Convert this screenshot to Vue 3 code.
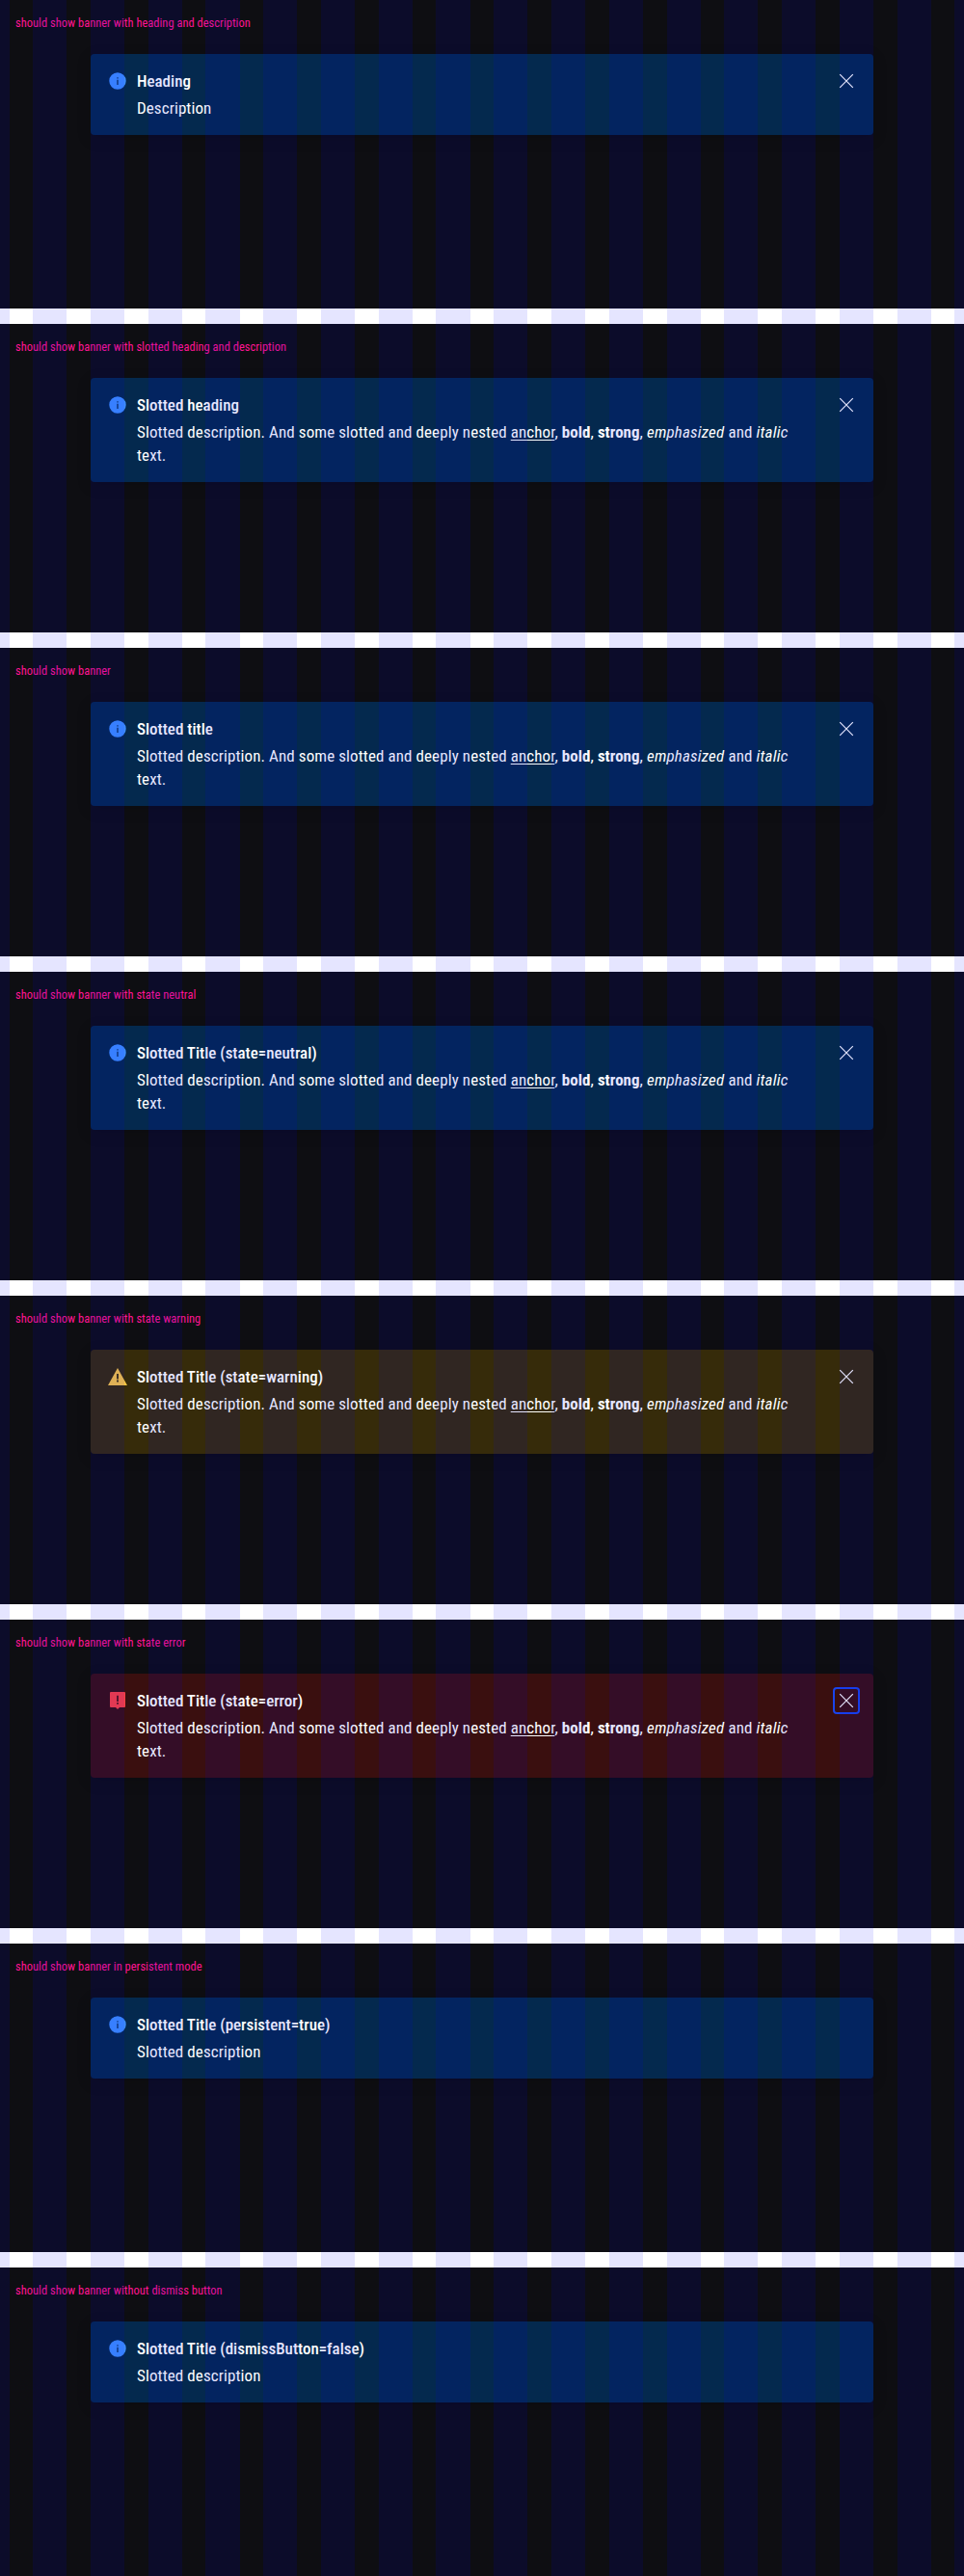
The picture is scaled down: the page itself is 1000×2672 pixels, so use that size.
<script setup>
const cases = [
  { label: 'should show banner with heading and description', title: 'Heading', text: 'Description', close: true },
  { label: 'should show banner with slotted heading and description', title: 'Slotted heading', close: true },
  { label: 'should show banner', title: 'Slotted title', close: true },
  { label: 'should show banner with state neutral', title: 'Slotted Title (state=neutral)', close: true },
  { label: 'should show banner with state warning', title: 'Slotted Title (state=warning)', state: 'warning', close: true },
  { label: 'should show banner with state error', title: 'Slotted Title (state=error)', state: 'error', close: true, focus: true },
  { label: 'should show banner in persistent mode', title: 'Slotted Title (persistent=true)', text: 'Slotted description' },
  { label: 'should show banner without dismiss button', title: 'Slotted Title (dismissButton=false)', text: 'Slotted description' },
]
</script>

<template>
  <div class="page">
    <section v-for="c in cases" :key="c.label" class="frame">
      <p class="label">{{ c.label }}</p>
      <div class="banner" :class="c.state">
        <svg v-if="c.state === 'warning'" class="icon" viewBox="0 0 24 24"><path fill-rule="evenodd" d="M12 3 22 21H2ZM11.100 9v5.500h1.800V9Zm0 6.600v2h1.800v-2Z" /></svg>
        <svg v-else-if="c.state === 'error'" class="icon" viewBox="0 0 24 24"><path fill-rule="evenodd" d="M5 3h14a1 1 0 0 1 1 1v14a1 1 0 0 1-1 1h-5l-2 2-2-2H5a1 1 0 0 1-1-1V4a1 1 0 0 1 1-1Zm6.200 3.800v6.200h1.600V6.800Zm0 7.300v1.700h1.600v-1.700Z" /></svg>
        <svg v-else class="icon" viewBox="0 0 24 24"><path fill-rule="evenodd" d="M12 3.300a8.700 8.700 0 1 0 0 17.400 8.700 8.700 0 0 0 0-17.400Zm-.6 4.900h1.200v1.400h-1.200Zm0 2.500h1.200v5.400h-1.200Z" /></svg>
        <div class="content">
          <h5>{{ c.title }}</h5>
          <p v-if="c.text">{{ c.text }}</p>
          <p v-else>Slotted description. And some slotted and deeply nested <a href="#">anchor</a>, <b>bold</b>, <strong>strong</strong>, <em>emphasized</em> and <i>italic</i> text.</p>
        </div>
        <button v-if="c.close" class="close" :class="{ focused: c.focus }" type="button" aria-label="Close">
          <svg viewBox="0 0 24 24"><path d="M5.200 5.200 18.800 18.800M18.800 5.200 5.200 18.800" /></svg>
        </button>
      </div>
    </section>
    <div class="grid"><span v-for="n in 18" :key="n" class="col"></span></div>
  </div>
</template>

<style>
body { margin: 0; background: #fff; }
</style>
<style scoped>
.page {
  position: relative;
  display: flex;
  flex-direction: column;
  gap: 16px;
  overflow: hidden;
  font-family: Roboto, "Liberation Sans", sans-serif;
  font-stretch: 75%;
}
.frame { height: 320px; background: #0e0e12; }
.label {
  box-sizing: border-box;
  height: 56px;
  margin: 0;
  padding: 15px 16px 0;
  color: #ff1493;
  font-size: 12.5px;
  line-height: 18px;
}
.banner {
  display: flex;
  align-items: flex-start;
  margin: 0 94px;
  padding: 16px;
  border-radius: 4px;
  background: #04294e;
  color: #fff;
  box-shadow: 0 4px 16px rgba(0, 0, 0, .14);
}
.icon { flex: none; width: 24px; height: 24px; margin-right: 8px; fill: #3e8eff; }
.warning { background: #362b0a; }
.warning .icon { fill: #f9c643; }
.error { background: #3a0f0f; }
.error .icon { fill: #fc4040; }
.content { flex: 1; }
.content h5, .content p { margin: 0; font-size: 17px; line-height: 24px; }
.content h5 { margin-bottom: 4px; font-weight: 500; }
.content p { font-weight: 400; letter-spacing: .09px; }
.content b, .content strong { font-weight: 700; letter-spacing: 0; }
.content a { color: inherit; text-decoration: underline; text-decoration-thickness: 1px; text-underline-offset: 2px; text-decoration-skip-ink: none; }
.content em, .content i { letter-spacing: .2px; }
.close { flex: none; width: 24px; height: 24px; margin-left: 32px; padding: 0; border: 0; border-radius: 2px; background: none; }
.close svg { display: block; width: 24px; height: 24px; fill: none; stroke: #fff; stroke-width: 1.2; }
.focused { outline: 2px solid #1a44ea; }
.grid { position: absolute; inset: 0; display: flex; gap: 24.56px; margin-left: -25.69px; pointer-events: none; }
.col { flex: 0 0 35.22px; background: rgba(0, 0, 255, .1); }
</style>
